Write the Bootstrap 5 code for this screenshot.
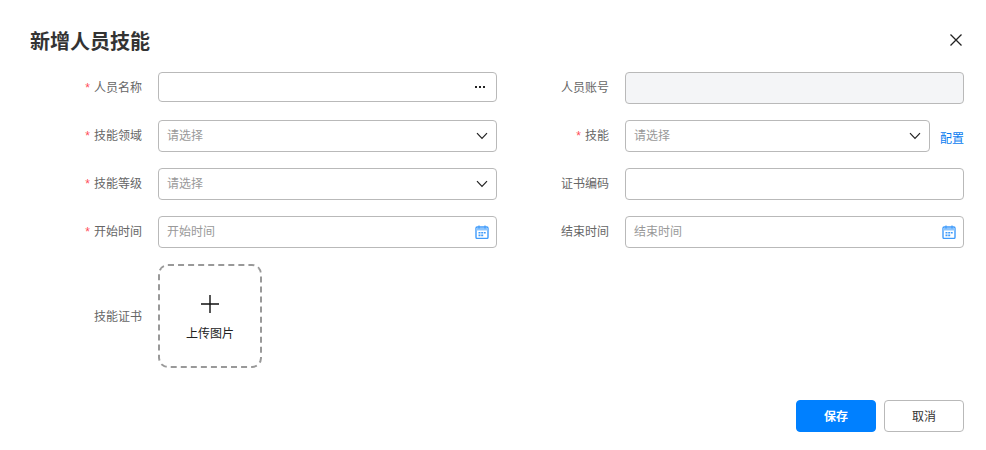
<!DOCTYPE html>
<html lang="zh">
<head>
<meta charset="utf-8">
<title>新增人员技能</title>
<link href="https://cdn.jsdelivr.net/npm/bootstrap@5.3.0/dist/css/bootstrap.min.css" rel="stylesheet">
<style>
html,body{height:450px;overflow:hidden;background:#fff}
body{font-family:"Noto Sans CJK SC","Liberation Sans",sans-serif;font-size:12px;color:#666}
.dlg{width:986px;height:450px;padding:22px 22px 0 30px}
.dlg-head{height:38px;margin-bottom:12px}
.dlg-title{font-size:20px;font-weight:700;color:#333;line-height:38px;margin:0}
.dlg-close{width:14px;height:14px;padding:0;border:0;background:none;margin:-3px 1px 0 0;display:flex}
.form-rows{display:grid;grid-template-columns:467px 467px;row-gap:16px}
.fld{display:flex;height:32px;align-items:flex-start}
.fld-label{width:112px;flex:none;text-align:right;line-height:30px;color:#666;margin-right:16px}
.req{color:#ff4d5a;margin-right:4px;font-family:"Liberation Sans",sans-serif}
.box{width:339px;height:32px;border:1px solid #b9b9b9;border-radius:4px;background:#fff;padding:0 8px;display:flex;align-items:center;justify-content:space-between;color:#999;line-height:1}
.box>span:first-child{padding-bottom:2px}
.box-short{height:30px}
.box-off{background:#f4f5f7}
.box-narrow{width:305px}
.dots{margin-right:3px}
.cal{margin-right:-1px}
.cfg{color:#0a7cf0;margin-left:10px;line-height:36px;text-decoration:none;white-space:nowrap}
.upl-row{display:flex;align-items:center;height:104px;grid-column:1 / span 2}
.upl{width:104px;height:104px;border:2px dashed #999;border-radius:10px;display:flex;flex-direction:column;align-items:center;color:#222;padding-top:29px}
.upl svg{margin-bottom:11px}
.foot{display:flex;justify-content:flex-end;gap:8px;margin-top:32px}
.act{width:80px;height:32px;padding:0;font-size:12px;border-radius:4px;line-height:30px}
.act-save{background:#0080ff;border:1px solid #0080ff;color:#fff;font-weight:700}
.act-cancel{background:#fff;border:1px solid #b9b9b9;color:#333}
</style>
</head>
<body>
<div class="dlg">
  <div class="dlg-head d-flex justify-content-between align-items-center">
    <h5 class="dlg-title">新增人员技能</h5>
    <button class="dlg-close" type="button" aria-label="关闭"><svg width="14" height="14" viewBox="0 0 14 14"><path d="M1.5 1.5l11 11M12.5 1.5l-11 11" stroke="#222" stroke-width="1.3" fill="none"/></svg></button>
  </div>
  <div class="form-rows">
    <div class="fld"><label class="fld-label"><span class="req">*</span>人员名称</label>
      <div class="box box-short"><span></span><svg class="dots" width="10" height="10" viewBox="0 0 10 10"><path d="M0 4h2v2H0zM4 4h2v2H4zM8 4h2v2H8z" fill="#222"/></svg></div></div>
    <div class="fld"><label class="fld-label">人员账号</label><div class="box box-off"></div></div>

    <div class="fld"><label class="fld-label"><span class="req">*</span>技能领域</label>
      <div class="box"><span>请选择</span><svg width="12" height="8" viewBox="0 0 12 8"><path d="M1 1.2l5 5.2 5-5.2" stroke="#222" stroke-width="1.2" fill="none"/></svg></div></div>
    <div class="fld"><label class="fld-label"><span class="req">*</span>技能</label>
      <div class="box box-narrow"><span>请选择</span><svg width="12" height="8" viewBox="0 0 12 8"><path d="M1 1.2l5 5.2 5-5.2" stroke="#222" stroke-width="1.2" fill="none"/></svg></div><a class="cfg" href="#">配置</a></div>

    <div class="fld"><label class="fld-label"><span class="req">*</span>技能等级</label>
      <div class="box"><span>请选择</span><svg width="12" height="8" viewBox="0 0 12 8"><path d="M1 1.2l5 5.2 5-5.2" stroke="#222" stroke-width="1.2" fill="none"/></svg></div></div>
    <div class="fld"><label class="fld-label">证书编码</label><div class="box"></div></div>

    <div class="fld"><label class="fld-label"><span class="req">*</span>开始时间</label>
      <div class="box"><span>开始时间</span><svg class="cal" width="14" height="14" viewBox="0 0 14 14"><rect x="1" y="2" width="12" height="11.4" rx="1.2" fill="#fff" stroke="#3f9bfb" stroke-width="1.4"/><path d="M1 3h12v2.5H1z" fill="#8cc4fd"/><path d="M4 .5v3M10 .5v3" stroke="#3f9bfb" stroke-width="1.2"/><path d="M3.5 7h2v1.6h-2zM6.2 7h2v1.6h-2zM8.9 7h1.8v1.6H8.9zM3.5 9.6h2v1.6h-2zM6.2 9.6h2v1.6h-2z" fill="#3f9bfb"/></svg></div></div>
    <div class="fld"><label class="fld-label">结束时间</label>
      <div class="box"><span>结束时间</span><svg class="cal" width="14" height="14" viewBox="0 0 14 14"><rect x="1" y="2" width="12" height="11.4" rx="1.2" fill="#fff" stroke="#3f9bfb" stroke-width="1.4"/><path d="M1 3h12v2.5H1z" fill="#8cc4fd"/><path d="M4 .5v3M10 .5v3" stroke="#3f9bfb" stroke-width="1.2"/><path d="M3.5 7h2v1.6h-2zM6.2 7h2v1.6h-2zM8.9 7h1.8v1.6H8.9zM3.5 9.6h2v1.6h-2zM6.2 9.6h2v1.6h-2z" fill="#3f9bfb"/></svg></div></div>

    <div class="upl-row"><label class="fld-label">技能证书</label>
      <div class="upl"><svg width="18" height="18" viewBox="0 0 18 18"><path d="M9 0v18M0 9h18" stroke="#111" stroke-width="1.4" fill="none"/></svg><span>上传图片</span></div></div>
  </div>
  <div class="foot">
    <button class="btn act act-save" type="button">保存</button>
    <button class="btn act act-cancel" type="button">取消</button>
  </div>
</div>
<script src="https://cdn.jsdelivr.net/npm/bootstrap@5.3.0/dist/js/bootstrap.bundle.min.js"></script>
</body>
</html>
